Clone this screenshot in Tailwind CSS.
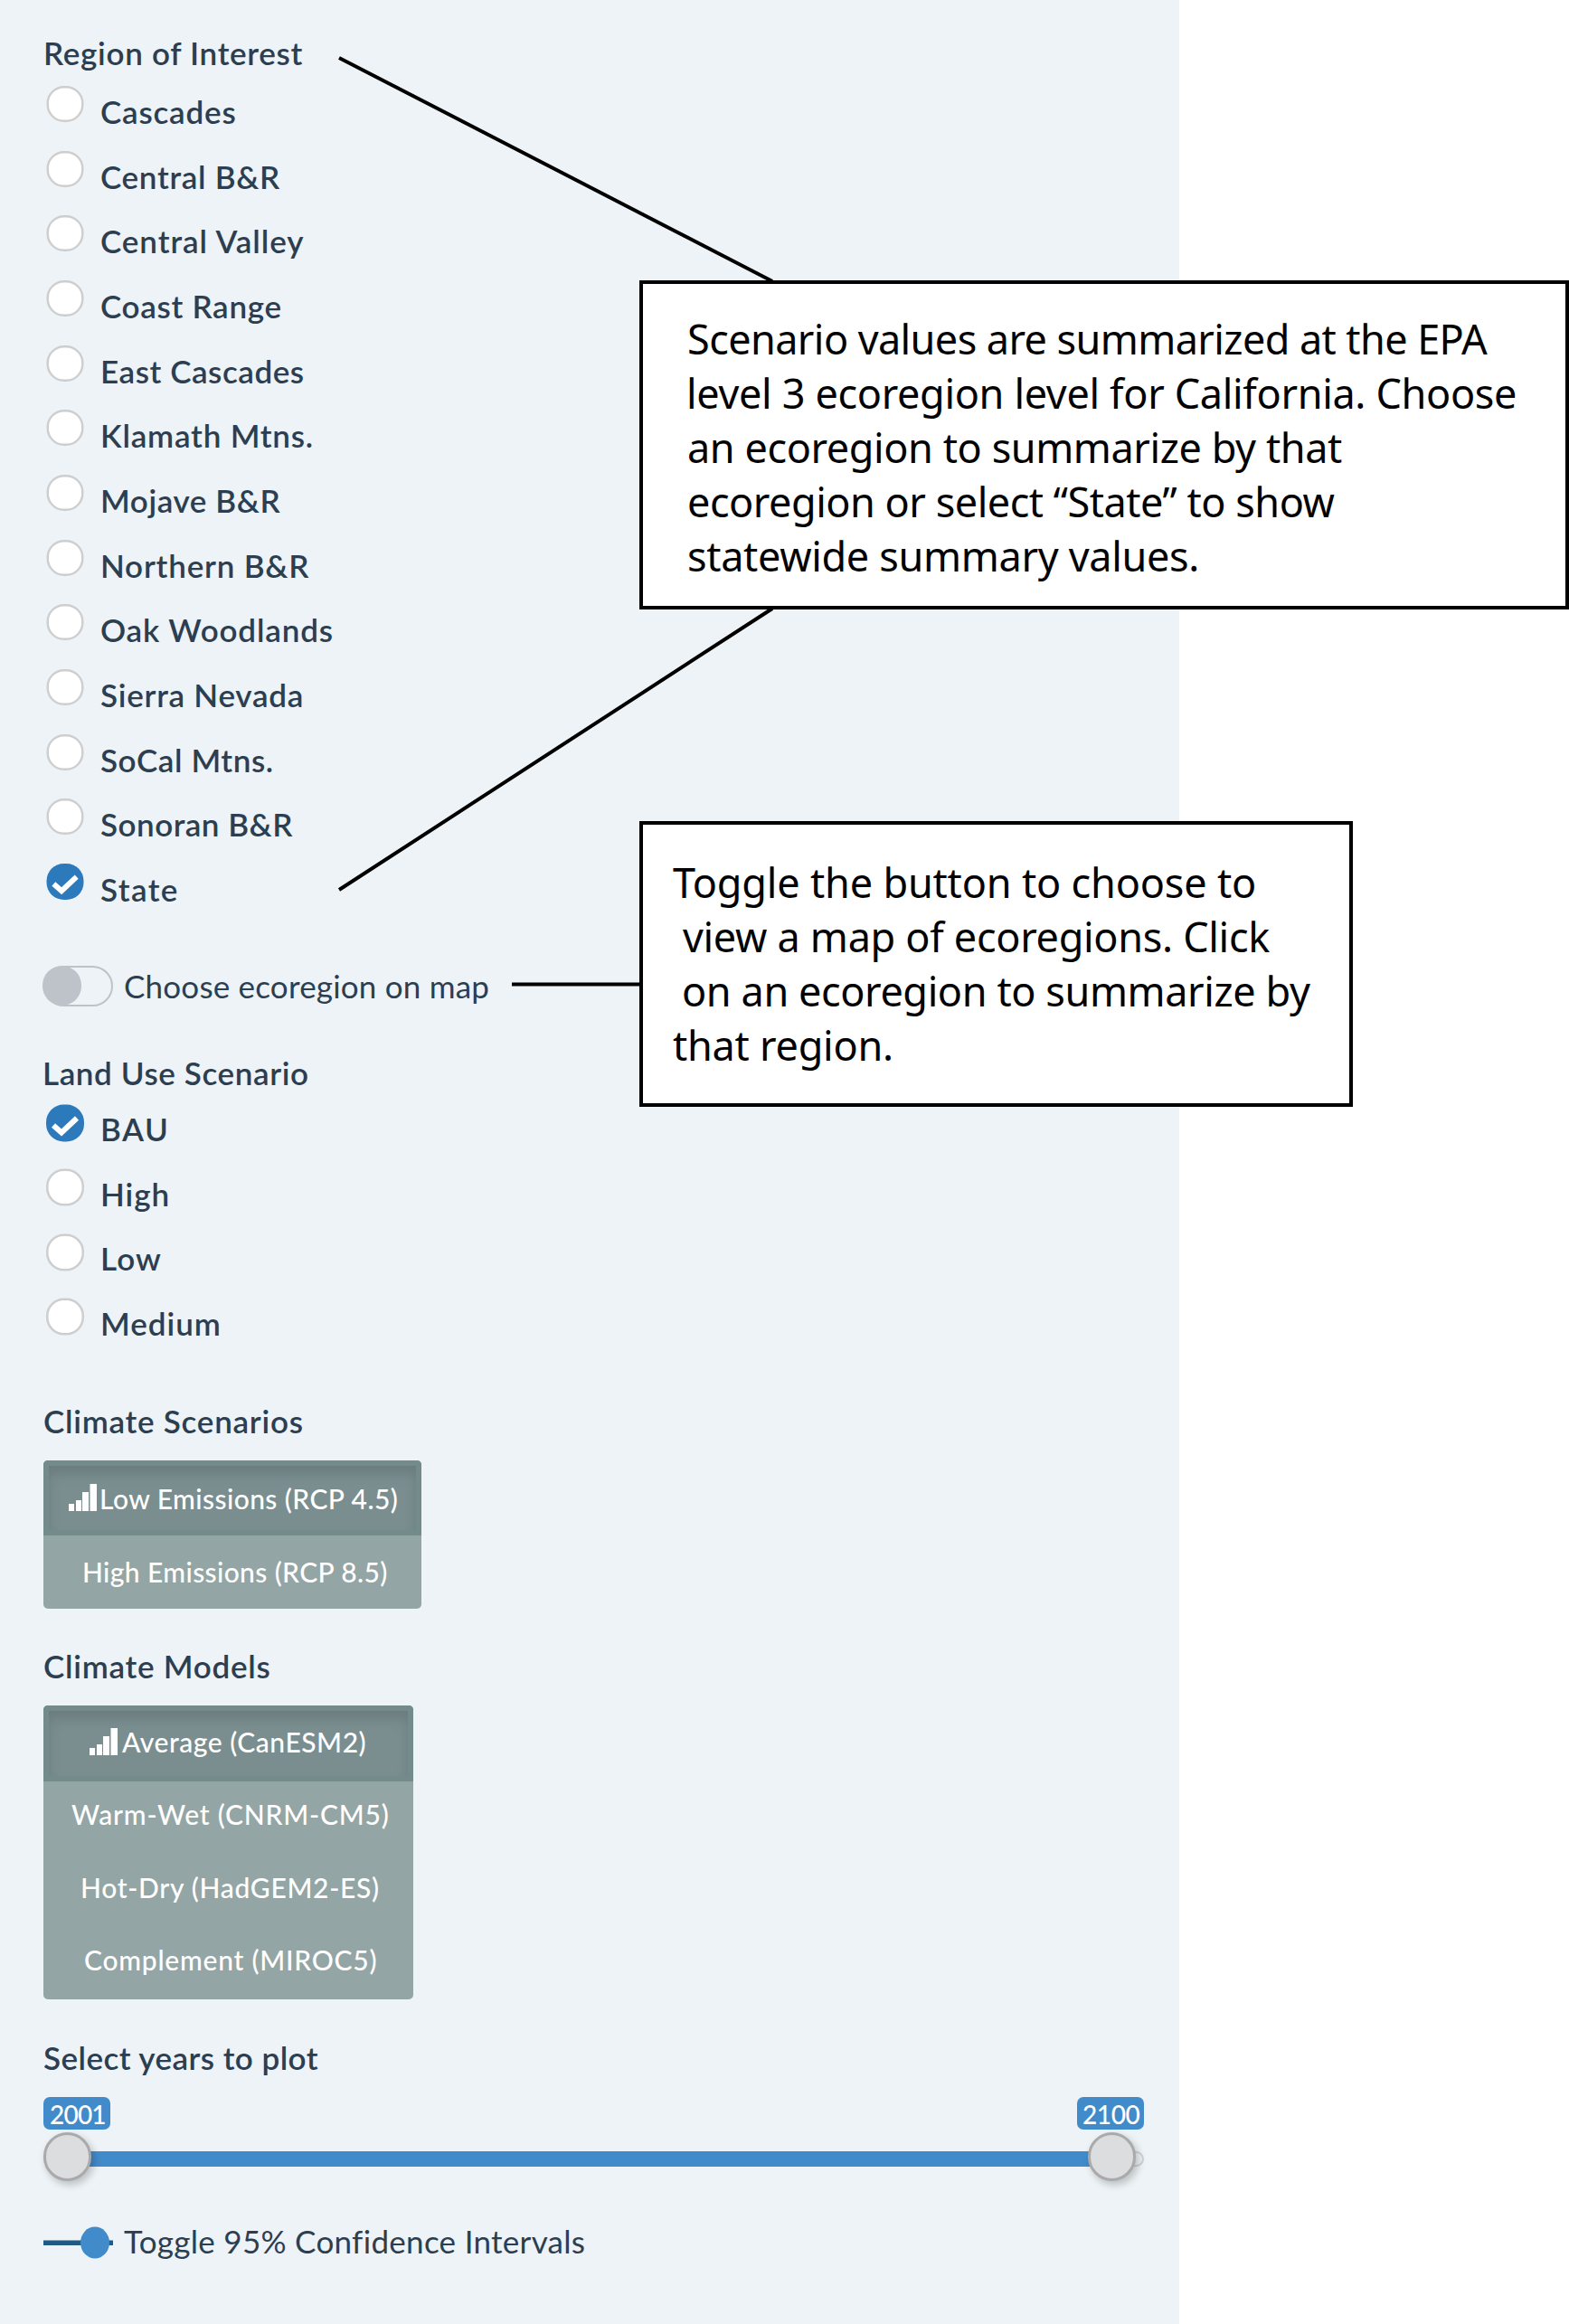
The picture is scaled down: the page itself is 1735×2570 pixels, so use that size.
<!DOCTYPE html>
<html lang="en">
<head>
<meta charset="utf-8">
<title>Scenario controls</title>
<script src="https://cdn.jsdelivr.net/npm/@tailwindcss/browser@4"></script>
</head>
<body class="bg-white">
<svg class="hidden">
  <symbol id="ring" viewBox="0 0 42 41"><rect x="1.25" y="1.25" width="39.5" height="38.5" rx="18.5" fill="#fff" stroke="#cecece" stroke-width="2.5"/></symbol>
  <symbol id="check" viewBox="0 0 42 41"><rect width="42" height="41" rx="19.5" fill="#2c7abb"/><path d="M8 23 L17 31 L34 15" fill="none" stroke="#fff" stroke-width="6"/></symbol>
  <symbol id="signal" viewBox="0 0 32 30"><path fill="#fff" d="M0 22h6v8H0zM8 18h6v12H8zM15 9h7v21h-7zM23.500 0H31v30h-7.500z"/></symbol>
</svg>
<div class="relative h-[2570px] w-[1735px] overflow-hidden">
  <aside class="h-full w-[1304px] bg-[#edf3f6] pt-[39px] pl-12 font-['Lato',sans-serif] text-[35px] leading-[38px] font-semibold whitespace-nowrap text-[#2c3e50]">
    <section>
      <h2 class="h-[49px] tracking-[0.7px]">Region of Interest</h2>
      <ul class="h-[932px]">
        <li class="flex h-[71.67px]"><svg class="mt-[7px] ml-[3px] h-[40px] w-[42px]"><use href="#ring"/></svg><span class="ml-[18px] pt-[16px] tracking-[0.8px]">Cascades</span></li>
        <li class="flex h-[71.67px]"><svg class="mt-[7px] ml-[3px] h-[40px] w-[42px]"><use href="#ring"/></svg><span class="ml-[18px] pt-[16px] tracking-[0.7px]">Central B&amp;R</span></li>
        <li class="flex h-[71.67px]"><svg class="mt-[7px] ml-[3px] h-[40px] w-[42px]"><use href="#ring"/></svg><span class="ml-[18px] pt-[16px] tracking-[0.95px]">Central Valley</span></li>
        <li class="flex h-[71.67px]"><svg class="mt-[7px] ml-[3px] h-[40px] w-[42px]"><use href="#ring"/></svg><span class="ml-[18px] pt-[16px] tracking-[0.7px]">Coast Range</span></li>
        <li class="flex h-[71.67px]"><svg class="mt-[7px] ml-[3px] h-[40px] w-[42px]"><use href="#ring"/></svg><span class="ml-[18px] pt-[16px] tracking-[0.55px]">East Cascades</span></li>
        <li class="flex h-[71.67px]"><svg class="mt-[7px] ml-[3px] h-[40px] w-[42px]"><use href="#ring"/></svg><span class="ml-[18px] pt-[16px] tracking-[0.8px]">Klamath Mtns.</span></li>
        <li class="flex h-[71.67px]"><svg class="mt-[7px] ml-[3px] h-[40px] w-[42px]"><use href="#ring"/></svg><span class="ml-[18px] pt-[16px] tracking-[0.6px]">Mojave B&amp;R</span></li>
        <li class="flex h-[71.67px]"><svg class="mt-[7px] ml-[3px] h-[40px] w-[42px]"><use href="#ring"/></svg><span class="ml-[18px] pt-[16px] tracking-[0.8px]">Northern B&amp;R</span></li>
        <li class="flex h-[71.67px]"><svg class="mt-[7px] ml-[3px] h-[40px] w-[42px]"><use href="#ring"/></svg><span class="ml-[18px] pt-[16px] tracking-[0.85px]">Oak Woodlands</span></li>
        <li class="flex h-[71.67px]"><svg class="mt-[7px] ml-[3px] h-[40px] w-[42px]"><use href="#ring"/></svg><span class="ml-[18px] pt-[16px] tracking-[0.75px]">Sierra Nevada</span></li>
        <li class="flex h-[71.67px]"><svg class="mt-[7px] ml-[3px] h-[40px] w-[42px]"><use href="#ring"/></svg><span class="ml-[18px] pt-[16px] tracking-[0.6px]">SoCal Mtns.</span></li>
        <li class="flex h-[71.67px]"><svg class="mt-[7px] ml-[3px] h-[40px] w-[42px]"><use href="#ring"/></svg><span class="ml-[18px] pt-[16px] tracking-[0.5px]">Sonoran B&amp;R</span></li>
        <li class="flex h-[71.67px]"><svg class="mt-[7px] ml-[3px] h-[40px] w-[42px]"><use href="#check"/></svg><span class="ml-[18px] pt-[16px] tracking-[1.4px]">State</span></li>
      </ul>
    </section>

    <div class="mt-12 flex h-[45px] leading-[44px] font-normal">
      <span class="h-[45px] w-[77px] rounded-full border-[2.500px] border-[#bdc3c9]"><span class="-mt-[2px] -ml-[3px] block h-[44px] w-[43px] rounded-full bg-[#bdc3c9]"></span></span>
      <span class="ml-[12px] tracking-[0.2px]">Choose ecoregion on map</span>
    </div>

    <section class="mt-[54px]">
      <h2 class="-ml-px h-[46px] tracking-[0.6px]">Land Use Scenario</h2>
      <ul class="h-[287px]">
        <li class="flex h-[71.67px]"><svg class="mt-[7.500px] ml-[3px] h-[42px] w-[42px]"><use href="#check"/></svg><span class="ml-[18px] pt-[16px] tracking-[1.6px]">BAU</span></li>
        <li class="flex h-[71.67px]"><svg class="mt-[7.500px] ml-[3px] h-[42px] w-[42px]"><use href="#ring"/></svg><span class="ml-[18px] pt-[16px] tracking-[1px]">High</span></li>
        <li class="flex h-[71.67px]"><svg class="mt-[7.500px] ml-[3px] h-[42px] w-[42px]"><use href="#ring"/></svg><span class="ml-[18px] pt-[16px] tracking-[1.2px]">Low</span></li>
        <li class="flex h-[71.67px]"><svg class="mt-[7.500px] ml-[3px] h-[42px] w-[42px]"><use href="#ring"/></svg><span class="ml-[18px] pt-[16px] tracking-[1px]">Medium</span></li>
      </ul>
    </section>

    <section class="mt-[52px]">
      <h2 class="h-[63px] tracking-[0.75px]">Climate Scenarios</h2>
      <div class="w-[418px] overflow-hidden rounded-[5px] bg-[#94a5a5] text-[30px] font-medium text-white">
        <button class="flex h-[83px] w-full items-center border-[6px] border-[#738c8b] bg-[#7a8e90] pl-[22px] shadow-[inset_0_9px_14px_rgba(0,0,0,0.125)]"><svg class="-mt-px h-[30px] w-8"><use href="#signal"/></svg><span class="ml-[2px] tracking-[0.43px]">Low Emissions (RCP 4.5)</span></button>
        <button class="flex h-[81px] w-full items-center pb-[2px] pl-[43px]"><span class="tracking-[0.38px]">High Emissions (RCP 8.5)</span></button>
      </div>
    </section>

    <section class="mt-[44px]">
      <h2 class="h-[63px] tracking-[0.75px]">Climate Models</h2>
      <div class="w-[409px] overflow-hidden rounded-[5px] bg-[#94a5a5] text-[30px] font-medium text-white">
        <button class="flex h-[84px] w-full items-center border-[6px] border-[#738c8b] bg-[#7a8e90] pb-[4px] pl-[45px] shadow-[inset_0_9px_14px_rgba(0,0,0,0.125)]"><svg class="-mt-px h-[30px] w-8"><use href="#signal"/></svg><span class="ml-[4px] tracking-[0.55px]">Average (CanESM2)</span></button>
        <button class="flex h-[80px] w-full items-center pb-[8px] pl-[31px]"><span class="tracking-[0.8px]">Warm-Wet (CNRM-CM5)</span></button>
        <button class="flex h-[81px] w-full items-center pb-[8px] pl-[41px]"><span class="tracking-[0.7px]">Hot-Dry (HadGEM2-ES)</span></button>
        <button class="flex h-[80px] w-full items-center pb-[8px] pl-[45px]"><span class="tracking-[0.75px]">Complement (MIROC5)</span></button>
      </div>
    </section>

    <section class="mt-[45px]">
      <h2 class="h-[63px] tracking-[0.45px]">Select years to plot</h2>
      <div class="h-[93px] w-[1217px]">
        <div class="flex justify-between text-[28px] leading-[38px] font-medium tracking-[-0.8px] text-white">
          <span class="h-9 w-[74px] rounded-[7px] bg-[#428bca] pl-[7px]">2001</span>
          <span class="h-9 w-[74px] rounded-[7px] bg-[#428bca] pl-[6px] tracking-[-0.4px]">2100</span>
        </div>
        <div class="relative mt-6 h-[17px] rounded-[9px] border-[2.500px] border-[#d0d2d3] bg-[#edf3f6]">
          <div class="absolute -top-[2px] left-[24px] h-[17px] w-[1157px] bg-[#428bca]"></div>
          <div class="absolute -top-[23px] -left-[2px] h-[54px] w-[53px] rounded-full border-[3px] border-[#aaa] bg-[#dcdddf] shadow-[3px_4px_9px_rgba(0,0,0,0.22)]"></div>
          <div class="absolute -top-[23px] left-[1153px] h-[54px] w-[53px] rounded-full border-[3px] border-[#aaa] bg-[#dcdddf] shadow-[3px_4px_9px_rgba(0,0,0,0.22)]"></div>
        </div>
      </div>
    </section>

    <div class="mt-[50px] flex h-9 leading-[33px] font-normal">
      <svg class="h-9 w-[77px]" viewBox="0 0 77 36"><path d="M0 15.500h77v5.500H0z" fill="#225a86"/><ellipse cx="57" cy="18" rx="16" ry="17.500" fill="#428bca"/></svg>
      <span class="ml-[12px] tracking-[0.3px] [font-variant-ligatures:none]">Toggle 95% Confidence Intervals</span>
    </div>
  </aside>

  <!-- Annotations that lie over the panel -->
  <svg class="absolute top-0 left-0 h-[1240px] w-[1735px]" viewBox="0 0 1735 1240" fill="none" stroke="#000" stroke-width="4"><path d="M375 64 854 311M375 984 854 673M566 1088.500H708"/></svg>
  <div class="absolute top-[310px] left-[707px] h-[364px] w-[1028px] border-4 border-black bg-white pt-[31px] pl-[49px] font-['Noto_Sans',sans-serif] text-[45px] leading-[60px] whitespace-nowrap text-black">
    <p class="tracking-[-0.58px]">Scenario values are summarized at the EPA</p>
    <p class="-ml-px tracking-[-0.33px]">level 3 ecoregion level for California. Choose</p>
    <p class="tracking-[-0.41px]">an ecoregion to summarize by that</p>
    <p class="tracking-[-0.47px]">ecoregion or select “State” to show</p>
    <p class="tracking-[-0.32px]">statewide summary values.</p>
  </div>
  <div class="absolute top-[908px] left-[707px] h-[316px] w-[789px] border-4 border-black bg-white pt-[34px] pl-[33px] font-['Noto_Sans',sans-serif] text-[45px] leading-[60px] whitespace-nowrap text-black">
    <p class="tracking-[-0.17px]">Toggle the button to choose to</p>
    <p class="pl-[11px] tracking-[-0.3px]">view a map of ecoregions. Click</p>
    <p class="pl-[10px] tracking-[-0.4px]">on an ecoregion to summarize by</p>
    <p class="tracking-[-0.24px]">that region.</p>
  </div>
</div>
</body>
</html>
